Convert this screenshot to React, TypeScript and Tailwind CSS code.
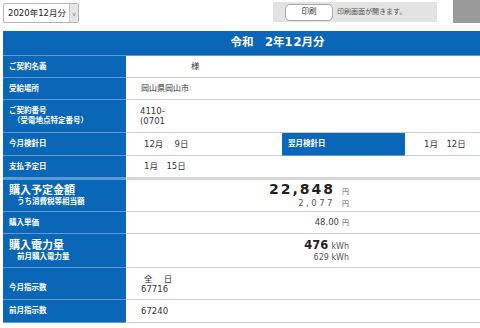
import type { ReactNode } from 'react'

const font = { fontFamily: '"DejaVu Sans", "Noto Sans CJK JP", sans-serif' }

function Row({ label, children, h, thick, labelAlign = 'items-center' }: { label: ReactNode; children: ReactNode; h: string; thick?: boolean; labelAlign?: string }) {
  const bw = thick ? 'border-b-[3px]' : 'border-b'
  return (
    <div className={`flex ${h}`}>
      <div className={`w-[123px] shrink-0 bg-[#0a66b7] ${bw} border-[#5d9bd6] text-white font-bold text-[7.5px] pl-[6px] flex ${labelAlign}`}>
        {label}
      </div>
      <div className={`flex-1 ml-px ${bw} ${thick ? 'border-[#d6d6d6]' : 'border-[#cccccc]'} text-[#333] text-[8.5px] flex items-center`}>
        {children}
      </div>
    </div>
  )
}

export default function App() {
  return (
    <div className="w-[480px] h-[328px] overflow-hidden bg-white" style={font}>
      <div className="flex h-[31px]">
        <div className="ml-[3px] mt-[3px] w-[76px] h-[20px] border border-[#b5b5b5] rounded-[2px] flex items-center bg-white">
          <span className="pl-[4px] text-[8.5px] text-[#222] flex-1 leading-none">2020年12月分</span>
          <span className="w-[9px] h-full bg-[#e6e6e6] border-l border-[#c8c8c8] flex items-center justify-center text-[6px] text-[#777]">v</span>
        </div>
        <div className="ml-[194px] mt-[2px] w-[164px] h-[20px] bg-[#e3e3e3] flex items-center">
          <div className="ml-[12px] w-[48px] h-[17px] bg-white border border-[#a8a8a8] rounded-[5px] flex items-center justify-center text-[7.5px] text-[#333]">印刷</div>
          <span className="ml-[4px] text-[7px] text-[#555]">印刷画面が開きます。</span>
        </div>
        <div className="ml-[16px] w-[27px] h-[23px] bg-[#9a9a9a]" />
      </div>

      <div className="ml-[3px] w-[549px]">
        <div className="h-[25px] bg-[#0a66b7] border-b border-[#5d9bd6] flex items-center justify-center text-white font-bold text-[11.5px]">
          令和　2年1&#8202;2月分
        </div>
        <Row label="ご契約名義" h="h-[22px]">
          <span className="pl-[64px]">様</span>
        </Row>
        <Row label="受給場所" h="h-[22px]">
          <span className="pl-[14px] text-[8px]">岡山県岡山市<span className="text-[#bbb]">ı</span></span>
        </Row>
        <Row
          h="h-[33px]"
          label={
            <div className="leading-[10px]">
              <div>ご契約番号</div>
              <div className="pl-[4px]">（受電地点特定番号）</div>
            </div>
          }
        >
          <div className="pl-[13px] leading-[10px]">
            <div>4110-</div>
            <div>(0701</div>
          </div>
        </Row>
        <div className="flex h-[23px]">
          <div className="w-[123px] shrink-0 bg-[#0a66b7] border-b border-[#5d9bd6] text-white font-bold text-[7.5px] pl-[6px] flex items-center">今月検針日</div>
          <div className="w-[155px] ml-px border-b border-[#cccccc] text-[#333] text-[8.5px] flex items-center">
            <span className="pl-[17px] whitespace-pre">12月　 9日</span>
          </div>
          <div className="w-[123px] shrink-0 bg-[#0a66b7] border-b border-[#5d9bd6] text-white font-bold text-[7.5px] pl-[6px] flex items-center">翌月検針日</div>
          <div className="flex-1 border-b border-[#cccccc] text-[#333] text-[8.5px] flex items-center">
            <span className="pl-[19px] whitespace-pre">1月　12日</span>
          </div>
        </div>
        <Row label="支払予定日" h="h-[24px]" thick>
          <span className="pl-[17px] whitespace-pre">1月　15日</span>
        </Row>
        <Row
          h="h-[32px]"
          label={
            <div className="leading-none">
              <div className="text-[11px] leading-[12px]">購入予定金額</div>
              <div className="pl-[8px] leading-[10px]">うち消費税等相当額</div>
            </div>
          }
        >
          <div className="w-[222px] text-right">
            <div className="leading-[12px]">
              <span className="text-[14px] font-bold tracking-[2px] text-[#222]">22,848</span>
              <span className="ml-[7px] text-[7px] text-[#666]">円</span>
            </div>
            <div className="leading-[10px]">
              <span className="text-[8.5px] tracking-[2.5px] text-[#555]">2,077</span>
              <span className="ml-[7px] text-[7px] text-[#666]">円</span>
            </div>
          </div>
        </Row>
        <Row label="購入単価" h="h-[22px]">
          <div className="w-[222px] text-right">
            <span className="text-[#444]">48.00</span>
            <span className="ml-[3px] text-[7px] text-[#666]">円</span>
          </div>
        </Row>
        <Row
          h="h-[34px]"
          label={
            <div className="leading-none">
              <div className="text-[11px] leading-[12px]">購入電力量</div>
              <div className="pl-[8px] leading-[10px]">前月購入電力量</div>
            </div>
          }
        >
          <div className="w-[222px] text-right">
            <div className="leading-[12px]">
              <span className="text-[11.5px] font-bold text-[#222]">476</span>
              <span className="ml-[3px] text-[8px] text-[#555]">kWh</span>
            </div>
            <div className="leading-[10px] text-[8px] text-[#555]">629 kWh</div>
          </div>
        </Row>
        <Row label="今月指示数" h="h-[32px]" labelAlign="items-end pb-[6px]">
          <div className="pl-[17px] leading-[10px]">
            <div className="whitespace-pre">全　 日</div>
            <div className="-ml-[3px]">67716</div>
          </div>
        </Row>
        <Row label="前月指示数" h="h-[23px]">
          <span className="pl-[14px]">67240</span>
        </Row>
      </div>
    </div>
  )
}
